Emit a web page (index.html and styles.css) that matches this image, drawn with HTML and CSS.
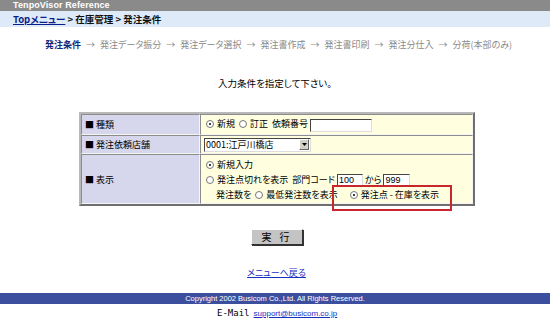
FILE: index.html
```html
<!DOCTYPE html>
<html lang="ja">
<head>
<meta charset="utf-8">
<link rel="stylesheet" href="styles.css">
</head>
<body>
<div class="titlebar">TenpoVisor Reference</div>
<div class="crumb"><a href="#" class="crumb-link">Topメニュー</a> &gt; 在庫管理 &gt; 発注条件</div>
<div class="steps"><span class="step-on">発注条件</span> → 発注データ振分 → 発注データ選択 → 発注書作成 → 発注書印刷 → 発注分仕入 → 分荷(本部のみ)</div>
<p class="prompt">入力条件を指定して下さい。</p>
<table class="form">
  <tr class="r1">
    <th class="lbl">■ 種類</th>
    <td class="val"><span class="radio on"></span>新規 <span class="radio"></span>訂正&nbsp; 依頼番号 <span class="txt w62"></span></td>
  </tr>
  <tr class="r2">
    <th class="lbl">■ 発注依頼店舗</th>
    <td class="val"><span class="select"><span class="sel-text">0001:江戸川橋店</span><span class="sel-btn"><svg width="5" height="3" viewBox="0 0 5 3"><path d="M0 0H5L2.5 3Z" fill="#000"/></svg></span></span></td>
  </tr>
  <tr class="r3">
    <th class="lbl">■ 表示</th>
    <td class="val">
      <div class="line"><span class="radio on"></span>新規入力</div>
      <div class="line"><span class="radio"></span>発注点切れを表示&nbsp; 部門コード <span class="txt w26">100</span> から <span class="txt w27">999</span></div>
      <div class="line ind">発注数を <span class="radio"></span>最低発注数を表示 <span class="mark"><span class="radio on"></span>発注点&nbsp;-&nbsp;在庫を表示</span></div>
    </td>
  </tr>
</table>
<div class="actions"><button class="btn">実 行</button></div>
<div class="back"><a href="#" class="back-link">メニューへ戻る</a></div>
<div class="footer">Copyright 2002 Busicom Co.,Ltd. All Rights Reserved.</div>
<div class="email"><span class="email-label">E-Mail</span> <a href="#" class="mail-link">support@busicom.co.jp</a></div>
</body>
</html>
```
FILE: styles.css
```css
* { box-sizing: border-box; }
html, body { margin: 0; padding: 0; background: #fff; }
body {
  font-family: "Noto Sans CJK JP", "Liberation Sans", sans-serif;
  font-size: 9px;
  color: #000;
  font-feature-settings: "palt";
  width: 550px;
  height: 324px;
  overflow: hidden;
}
.titlebar {
  height: 11px;
  background: #8a8a8a;
  color: #fff;
  font-family: "Liberation Sans", sans-serif;
  font-weight: bold;
  font-size: 9px;
  line-height: 11px;
  padding-left: 13px;
  letter-spacing: 0.1px;
}
.crumb {
  height: 16px;
  background: #deeaf8;
  font-weight: bold;
  font-size: 9.5px;
  line-height: 16px;
  padding-left: 13px;
  color: #111;
}
.crumb-link { color: #0a1f8c; text-decoration: underline; }
.steps {
  margin-top: 11px;
  padding-left: 45px;
  line-height: 14px;
  color: #8a8a8a;
  white-space: nowrap;
  word-spacing: 3px;
}
.step-on { color: #14287a; font-weight: bold; }
.prompt {
  margin: 24px 0 0;
  text-align: center;
  line-height: 14px;
  font-size: 9.5px;
}
.form {
  margin: 22px 0 0 79px;
  width: 396px;
  border-collapse: separate;
  border-spacing: 0;
  border: 2px solid;
  border-color: #b8b8b8 #6f6f6f #6f6f6f #b8b8b8;
}
.form th, .form td {
  padding: 0 0 0 3px;
  border: 1px solid;
  border-color: #8c8c8c #f4f4f4 #f4f4f4 #8c8c8c;
  font-weight: normal;
  text-align: left;
  vertical-align: middle;
}
.lbl { background: #d6d6ec; width: 119px; }
.val { background: #ffffe0; }
.r1 th, .r1 td { height: 21px; }
.r2 th, .r2 td { height: 19px; }
.r3 th, .r3 td { height: 50px; }
.line { height: 15px; line-height: 15px; white-space: nowrap; }
.ind { padding-left: 12px; }
.radio {
  display: inline-block;
  width: 8px; height: 8px;
  border-radius: 50%;
  border: 1px solid #777;
  background: #fff;
  margin: 0 3px 0 2px;
  vertical-align: -1px;
  position: relative;
}
.radio.on::after {
  content: "";
  position: absolute;
  left: 2px; top: 2px;
  width: 2px; height: 2px;
  border-radius: 50%;
  background: #000;
}
.txt {
  display: inline-block;
  height: 13px;
  border: 1px solid;
  border-color: #444 #ddd #ddd #444;
  background: #fff;
  vertical-align: middle;
  line-height: 11px;
  padding-left: 1px;
  font-family: "Liberation Sans", sans-serif;
}
.w62 { width: 62px; }
.w26 { width: 26px; }
.w27 { width: 27px; }
.select {
  display: inline-flex;
  width: 107px;
  height: 14px;
  border: 1px solid;
  border-color: #444 #ddd #ddd #444;
  background: #fff;
  vertical-align: middle;
  align-items: center;
  justify-content: space-between;
}
.sel-text { padding-left: 1px; line-height: 12px; }
.sel-btn {
  width: 10px; height: 11px;
  background: #d4d0c8;
  border: 1px solid;
  border-color: #fff #666 #666 #fff;
  display: flex; align-items: center; justify-content: center;
  margin-right: 1px;
}
.mark { position: relative; margin-left: 8px; }
.mark::before {
  content: "";
  position: absolute;
  left: -16px; right: -13px;
  top: -3px; bottom: -10px;
  border: 2px solid #c8272d;
}
.actions { margin-top: 23px; text-align: center; height: 17px; }
.btn {
  width: 52px; height: 16px;
  padding: 0;
  margin-left: 4px;
  font-family: inherit;
  font-size: 10px;
  line-height: 12px;
  background: #c4c4c4;
  border: 1px solid;
  border-color: #fff #333 #333 #fff;
  box-shadow: 1px 1px 0 #333;
  letter-spacing: 3px;
}
.back { margin-top: 20px; text-align: center; line-height: 14px; }
.back-link { color: #1a2fbf; text-decoration: underline; margin-left: 3px; }
.footer {
  margin-top: 13px;
  height: 11px;
  background: #3b4f9e;
  color: #fff;
  text-align: center;
  font-family: "Liberation Sans", sans-serif;
  font-size: 7.5px;
  line-height: 11px;
}
.email {
  margin-top: 2px;
  padding-left: 217px;
  line-height: 14px;
}
.email-label { font-family: "DejaVu Sans Mono", monospace; font-size: 9px; margin-right: 2px; }
.mail-link { color: #1a2fbf; text-decoration: underline; font-family: "Liberation Sans", sans-serif; font-size: 8px; }
```
